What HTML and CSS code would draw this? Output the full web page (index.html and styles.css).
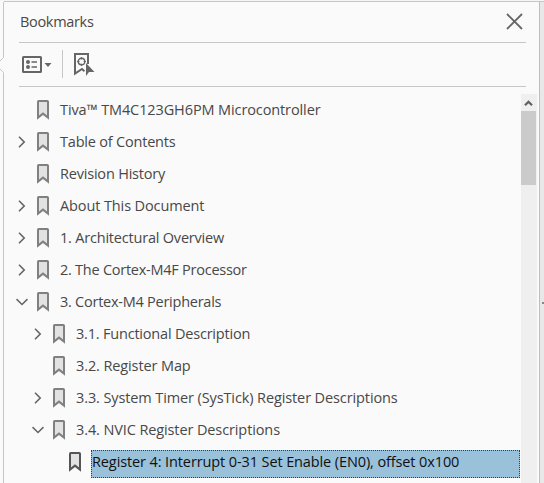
FILE: index.html
```html
<!DOCTYPE html>
<html lang="en">
<head>
<meta charset="utf-8">
<title>Bookmarks</title>
<link rel="stylesheet" href="styles.css">
</head>
<body>
<svg class="defs" width="0" height="0">
  <symbol id="mark" viewBox="0 0 12 20"><path d="M1 1.7Q1 1 1.7 1H10.3Q11 1 11 1.7V17.6L6 13.6L1 17.6Z" fill="#e2e2e2" stroke="currentColor" stroke-width="2"/></symbol>
  <symbol id="right" viewBox="0 0 12 12"><path d="M3 .8L8.2 6L3 11.2" fill="none" stroke="currentColor" stroke-width="1.6"/></symbol>
  <symbol id="down" viewBox="0 0 12 12"><path d="M.5 3.2L6 8.5L11.5 3.2" fill="none" stroke="currentColor" stroke-width="1.6"/></symbol>
</svg>
<div class="window">
  <svg class="edge" width="4" height="483"><path d="M3.5 0V55.5L0 59M0 67L3.5 70.5V483" fill="none" stroke="#c6c6c6"/></svg>
  <main class="panel">
    <header class="title"><h1>Bookmarks</h1>
      <svg class="close" width="17" height="17"><path d="M1 1L16 16M16 1L1 16" stroke="#666" stroke-width="1.8"/></svg>
    </header>
    <div class="toolbar">
      <svg width="30" height="18"><rect x="1" y="1" width="18" height="15" rx=".5" fill="none" stroke="#666" stroke-width="2"/><circle cx="6" cy="6" r="2" fill="#666"/><circle cx="6" cy="11" r="2" fill="#666"/><path d="M9.5 6H15M9.5 11H15" stroke="#666" stroke-width="1.7"/><path d="M22.5 7H29.5L26 11Z" fill="#666"/></svg>
      <span class="divider"></span>
      <svg width="22" height="24"><path d="M10.5 18.2L8 16L1 20.6V1H14V11" fill="none" stroke="#666" stroke-width="2"/><circle cx="7.5" cy="8.5" r="3.3" fill="none" stroke="#666" stroke-width="1.4"/><path d="M7.5 4V6.5M7.5 10.7V13M3 8.5H5.5M9.6 8.5H12" stroke="#666" stroke-width="1.2"/><path d="M12 10V23L15 19H20.5Z" fill="#666"/></svg>
    </div>
    <div class="body">
      <ul class="tree">
        <li><i></i><svg class="mark"><use href="#mark"/></svg><span class="loose">Tiva™ TM4C123GH6PM Microcontroller</span></li>
        <li><svg class="arrow"><use href="#right"/></svg><svg class="mark"><use href="#mark"/></svg><span>Table of Contents</span></li>
        <li><i></i><svg class="mark"><use href="#mark"/></svg><span>Revision History</span></li>
        <li><svg class="arrow"><use href="#right"/></svg><svg class="mark"><use href="#mark"/></svg><span class="loose">About This Document</span></li>
        <li><svg class="arrow"><use href="#right"/></svg><svg class="mark"><use href="#mark"/></svg><span>1. Architectural Overview</span></li>
        <li><svg class="arrow"><use href="#right"/></svg><svg class="mark"><use href="#mark"/></svg><span class="tight">2. The Cortex-M4F Processor</span></li>
        <li><svg class="arrow"><use href="#down"/></svg><svg class="mark"><use href="#mark"/></svg><span class="tight">3. Cortex-M4 Peripherals</span></li>
        <li class="level2"><svg class="arrow"><use href="#right"/></svg><svg class="mark"><use href="#mark"/></svg><span>3.1. Functional Description</span></li>
        <li class="level2"><i></i><svg class="mark"><use href="#mark"/></svg><span class="loose">3.2. Register Map</span></li>
        <li class="level2"><svg class="arrow"><use href="#right"/></svg><svg class="mark"><use href="#mark"/></svg><span class="loose">3.3. System Timer (SysTick) Register Descriptions</span></li>
        <li class="level2"><svg class="arrow"><use href="#down"/></svg><svg class="mark"><use href="#mark"/></svg><span class="loose">3.4. NVIC Register Descriptions</span></li>
        <li class="level3"><i></i><svg class="mark"><use href="#mark"/></svg><span class="selected loose">Register 4: Interrupt 0-31 Set Enable (EN0), offset 0x100</span></li>
      </ul>
      <div class="scrollbar"><svg width="15" height="17"><path d="M4 11.2L7.5 7.7L11 11.2" fill="none" stroke="#606060" stroke-width="2.2"/></svg><div class="thumb"></div></div>
    </div>
  </main>
  <aside><span></span></aside>
</div>
</body>
</html>
```
FILE: styles.css
```css
* { box-sizing: border-box; }
body { margin: 0; height: 483px; overflow: hidden; background: #fafafa; color: #484848; font: 14.5px/20px "Open Sans", "Noto Sans", sans-serif; }
svg { display: block; flex: none; }
.defs { position: absolute; }
.window { display: flex; height: 483px; border-top: 1px solid #f5f5f5; }
.edge { margin-top: 1px; }
.panel { width: 535px; border-top: 1px solid #c6c6c6; }
.title { display: flex; justify-content: space-between; height: 41px; margin: 0 13px 0 15px; border-bottom: 1px solid #c6c6c6; }
h1 { margin: 10px 0 0 1px; font: inherit; letter-spacing: -.32px; white-space: nowrap; }
.close { margin: 11px 3px 0 0; }
.toolbar { display: flex; height: 44px; margin: 0 13px 0 15px; padding: 7px 0 0 3px; border-bottom: 1px solid #c6c6c6; }
.toolbar svg:first-child { margin-top: 6px; }
.toolbar svg:last-child { margin-top: 3px; }
.divider { width: 1px; height: 28px; margin: 0 11px 0 10px; background: #c6c6c6; }
.body { display: flex; height: 396px; padding-top: 7px; }
.tree { width: 517px; margin: 0; padding: 0 1px 0 12px; list-style: none; }
li { display: flex; align-items: center; height: 32px; white-space: nowrap; }
li i, .arrow { width: 12px; height: 12px; flex: none; color: #666; }
.mark { width: 12px; height: 20px; margin: 0 11px 0 9px; color: #808080; }
.level2 { padding-left: 16px; }
.level3 { padding-left: 32px; }
.level3 .mark { margin-right: 10px; color: #555; }
.selected { flex: 1; height: 28px; margin-top: 4px; line-height: 22px; border: 1px dotted #4b3a30; background: #99c1da; color: #101010; }
.scrollbar { width: 16px; background: #efefef; }
.thumb { width: 15px; height: 74px; background: #cbcbcb; }
aside { display: flex; align-items: flex-start; flex: 1; margin-top: 1px; border-left: 1px solid #bebebe; background: #e8e8e8; box-shadow: 0 -1px #c6c6c6; }
aside span { width: 2px; height: 2px; margin: 300px 0 0 2px; background: #888; }
li span { letter-spacing: -.2px; }
li .loose { letter-spacing: -.11px; }
li .tight { letter-spacing: -.25px; }
```
